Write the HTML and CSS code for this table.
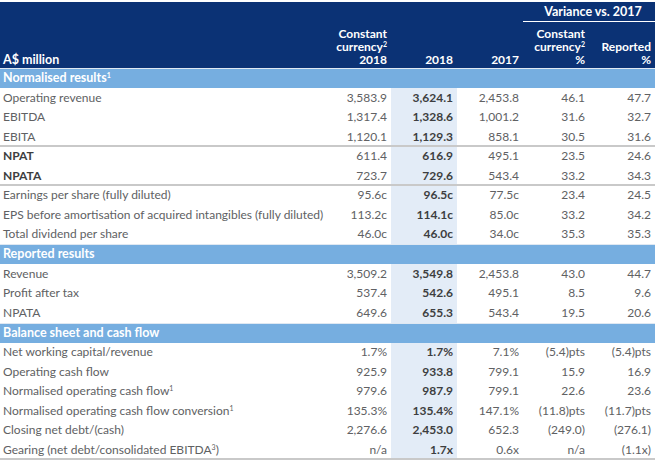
FILE: index.html
```html
<!DOCTYPE html>
<html>
<head>
<meta charset="utf-8">
<link rel="stylesheet" href="styles.css">
</head>
<body>
<table class="fin">
  <colgroup>
    <col class="c-label">
    <col class="c-num">
    <col class="c-num">
    <col class="c-num">
    <col class="c-num">
    <col class="c-num">
  </colgroup>
  <thead>
    <tr class="h-top">
      <th></th>
      <th></th>
      <th></th>
      <th></th>
      <th colspan="2" class="variance"><span>Variance vs. 2017</span></th>
    </tr>
    <tr class="h-main">
      <th class="lbl">A$ million</th>
      <th>Constant<br>currency<sup>2</sup><br>2018</th>
      <th>2018</th>
      <th>2017</th>
      <th>Constant<br>currency<sup>2</sup><br>%</th>
      <th>Reported<br>%</th>
    </tr>
  </thead>
  <tbody>
    <tr class="band"><td colspan="6">Normalised results<sup>1</sup></td></tr>
    <tr><td>Operating revenue</td><td>3,583.9</td><td class="cur">3,624.1</td><td>2,453.8</td><td>46.1</td><td>47.7</td></tr>
    <tr><td>EBITDA</td><td>1,317.4</td><td class="cur">1,328.6</td><td>1,001.2</td><td>31.6</td><td>32.7</td></tr>
    <tr class="sep"><td>EBITA</td><td>1,120.1</td><td class="cur">1,129.3</td><td>858.1</td><td>30.5</td><td>31.6</td></tr>
    <tr class="strong"><td>NPAT</td><td>611.4</td><td class="cur">616.9</td><td>495.1</td><td>23.5</td><td>24.6</td></tr>
    <tr class="strong sep"><td>NPATA</td><td>723.7</td><td class="cur">729.6</td><td>543.4</td><td>33.2</td><td>34.3</td></tr>
    <tr><td>Earnings per share (fully diluted)</td><td>95.6c</td><td class="cur">96.5c</td><td>77.5c</td><td>23.4</td><td>24.5</td></tr>
    <tr><td>EPS before amortisation of acquired intangibles (fully diluted)</td><td>113.2c</td><td class="cur">114.1c</td><td>85.0c</td><td>33.2</td><td>34.2</td></tr>
    <tr><td>Total dividend per share</td><td>46.0c</td><td class="cur">46.0c</td><td>34.0c</td><td>35.3</td><td>35.3</td></tr>
    <tr class="band"><td colspan="6">Reported results</td></tr>
    <tr><td>Revenue</td><td>3,509.2</td><td class="cur">3,549.8</td><td>2,453.8</td><td>43.0</td><td>44.7</td></tr>
    <tr><td>Profit after tax</td><td>537.4</td><td class="cur">542.6</td><td>495.1</td><td>8.5</td><td>9.6</td></tr>
    <tr><td>NPATA</td><td>649.6</td><td class="cur">655.3</td><td>543.4</td><td>19.5</td><td>20.6</td></tr>
    <tr class="band"><td colspan="6">Balance sheet and cash flow</td></tr>
    <tr><td>Net working capital/revenue</td><td>1.7%</td><td class="cur">1.7%</td><td>7.1%</td><td>(5.4)pts</td><td>(5.4)pts</td></tr>
    <tr><td>Operating cash flow</td><td>925.9</td><td class="cur">933.8</td><td>799.1</td><td>15.9</td><td>16.9</td></tr>
    <tr><td>Normalised operating cash flow<sup>1</sup></td><td>979.6</td><td class="cur">987.9</td><td>799.1</td><td>22.6</td><td>23.6</td></tr>
    <tr><td>Normalised operating cash flow conversion<sup>1</sup></td><td>135.3%</td><td class="cur">135.4%</td><td>147.1%</td><td>(11.8)pts</td><td>(11.7)pts</td></tr>
    <tr><td>Closing net debt/(cash)</td><td>2,276.6</td><td class="cur">2,453.0</td><td>652.3</td><td>(249.0)</td><td>(276.1)</td></tr>
    <tr class="last"><td>Gearing (net debt/consolidated EBITDA<sup>3</sup>)</td><td>n/a</td><td class="cur">1.7x</td><td>0.6x</td><td>n/a</td><td>(1.1x)</td></tr>
  </tbody>
</table>
</body>
</html>
```

FILE: styles.css
```css
html, body {
  margin: 0;
  padding: 0;
  background: #ffffff;
}
body {
  padding-top: 2px;
  font-family: "Lato", "Open Sans", sans-serif;
}
.fin {
  border-collapse: collapse;
  border-spacing: 0;
  table-layout: fixed;
  width: 655px;
  font-size: 12px;
  color: #606163;
}
.c-label { width: 325px; }
.c-num { width: 66px; }

.fin th {
  background: #0b3275;
  color: #ffffff;
  font-weight: 700;
  font-size: 12px;
  text-align: right;
  vertical-align: bottom;
  padding: 0 4px 2px 0;
  line-height: 13px;
}
.fin th.lbl { text-align: left; padding-left: 3px; font-size: 12.5px; }
.h-top th { height: 19px; padding: 0; vertical-align: top; }
.h-top th.variance {
  text-align: center;
}
.h-top th.variance span {
  display: block;
  border-bottom: 1.5px solid #ffffff;
  padding: 4px 0 3px 8px;
  font-size: 12.5px;
  line-height: 12px;
}
.h-main th { height: 44px; }
.fin sup {
  font-size: 7px;
  line-height: 0;
  vertical-align: 4px;
}

.fin td {
  height: 19.5px;
  padding: 0 4px 0 0;
  text-align: right;
  white-space: nowrap;
  line-height: 16px;
  vertical-align: middle;
}
.fin td:first-child { text-align: left; padding-left: 3px; }
.fin td.cur {
  background-color: #e3ecf7;
  font-weight: 700;
  color: #3d3e40;
}
.band td {
  background: #76aee0;
  color: #ffffff;
  font-weight: 700;
  font-size: 12.5px;
  height: 20px;
  box-shadow: inset 0 1px 0 #dfe8f2;
}
.strong td:first-child { font-weight: 700; color: #3d3e40; }
.sep td,
.last td {
  background-image: linear-gradient(#c9c9c9, #c9c9c9);
  background-size: 100% 2px;
  background-position: left bottom;
  background-repeat: no-repeat;
}
```
